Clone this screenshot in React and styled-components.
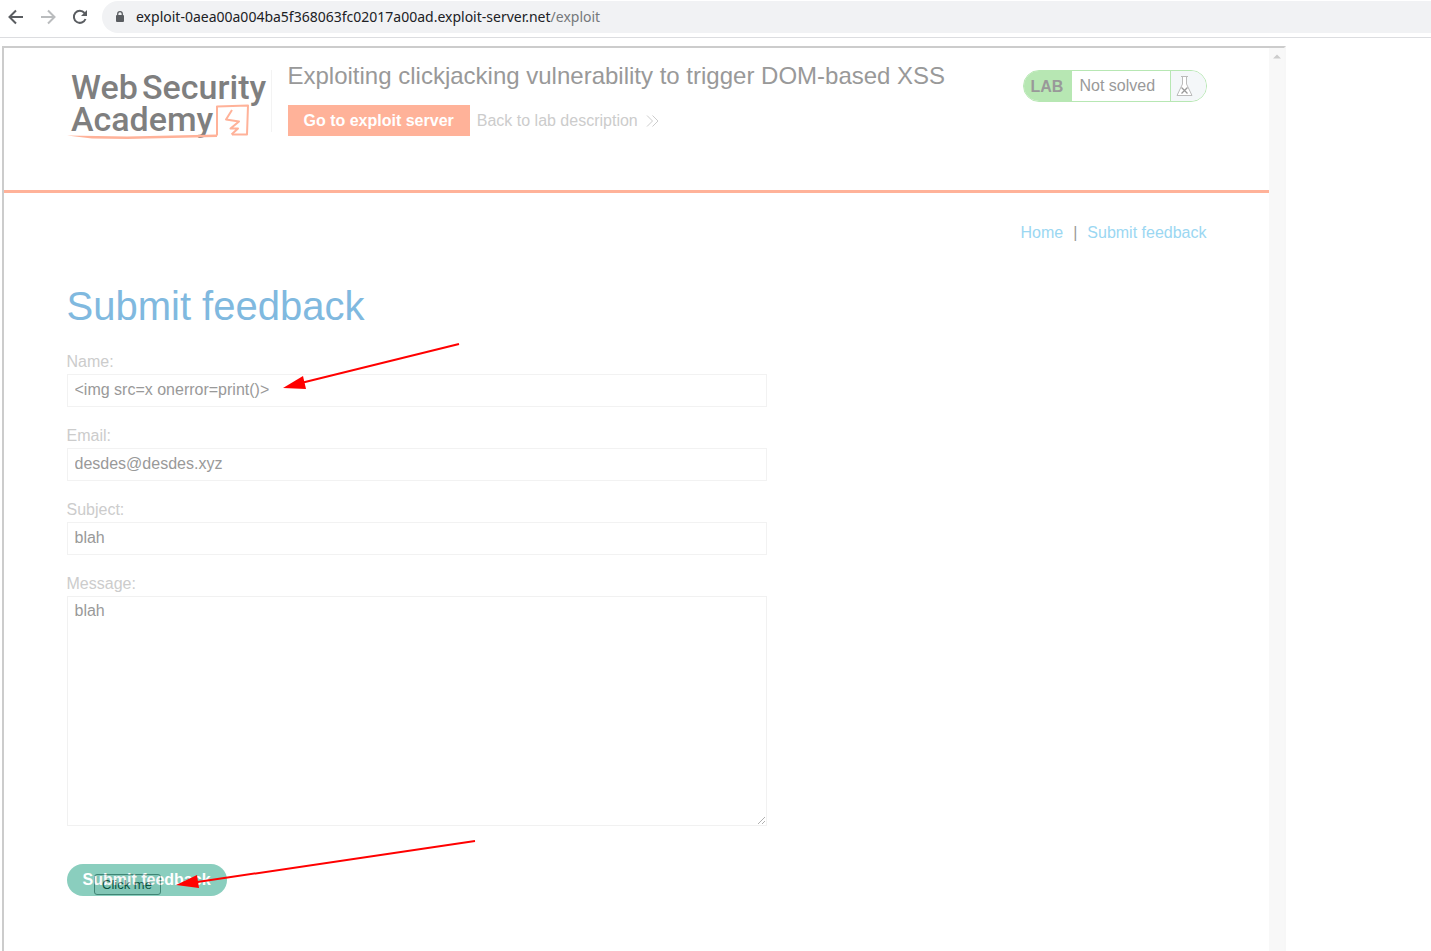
import React from "react";
import styled, { createGlobalStyle } from "styled-components";

const GlobalStyle = createGlobalStyle`
  *, *::before, *::after { box-sizing: border-box; }
  body {
    margin: 0;
    background: #fff;
    font-family: "Liberation Sans", Arial, sans-serif;
    font-size: 16px;
    line-height: 20px;
  }
`;

const Window = styled.div`
  display: flex;
  flex-direction: column;
  height: 100vh;
  overflow: hidden;
`;

const Toolbar = styled.header`
  display: flex;
  flex: none;
  align-items: center;
  gap: 12px;
  height: 38px;
  padding: 0 0 4px 6px;
  border-bottom: 1px solid #dcdde0;
`;

const ToolButton = styled.button`
  display: flex;
  width: 20px;
  height: 20px;
  padding: 0;
  border: 0;
  background: none;
  color: ${(p) => (p.disabled ? "#babcbe" : "#5a5d61")};
`;

const AddressBar = styled.div`
  display: flex;
  flex: 1;
  align-items: center;
  gap: 10px;
  height: 32px;
  padding-left: 12px;
  border-radius: 16px 0 0 16px;
  background: #f1f2f4;
  color: #202124;
  font-family: "Noto Sans", sans-serif;
  font-size: 14px;
`;

const Path = styled.span`
  color: #75787b;
`;

const Frame = styled.div`
  display: flex;
  flex: 1;
  min-height: 0;
  margin: 8px 145px 0 2px;
  border: 2px solid #ccc;
  border-right-color: #f7f7f7;
  border-bottom: 0;
`;

const Document = styled.div`
  flex: 1;
  min-width: 0;
`;

const ScrollTrack = styled.div`
  display: flex;
  flex: none;
  justify-content: center;
  width: 15px;
  padding-top: 6px;
  background: #f8f8f8;
`;

const Container = styled.div`
  max-width: 1140px;
  margin: 0 auto;
`;

const LabHeader = styled.div`
  height: 145px;
  border-bottom: 3px solid #ffb299;
`;

const HeaderRow = styled(Container)`
  display: flex;
  align-items: flex-start;
  padding-top: 14px;
`;

const LogoLink = styled.a`
  display: flex;
  height: 62px;
  margin-top: 8px;
  padding-right: 4px;
  border-right: 1px solid #f3f3f3;
`;

const TitleBlock = styled.div`
  flex: 1;
  padding-left: 16px;
`;

const Title = styled.h2`
  margin: 0 0 15px;
  color: #999;
  font-size: 24px;
  font-weight: 400;
  line-height: 28px;
`;

const Actions = styled.div`
  display: flex;
  align-items: center;
  gap: 7px;
`;

const ExploitButton = styled.button`
  height: 31px;
  padding: 0 16px;
  border: 0;
  background: #ffb299;
  color: #fff;
  font: bold 16px/20px "Liberation Sans", Arial, sans-serif;
`;

const BackLink = styled.a`
  display: flex;
  align-items: center;
  gap: 8px;
  color: #ccc;
  text-decoration: none;
`;

const Status = styled.div`
  display: flex;
  width: 184px;
  height: 32px;
  margin-top: 8px;
  overflow: hidden;
  border: 1px solid #b7e7b3;
  border-radius: 16px;
  color: #999;
  line-height: 30px;
`;

const StatusTag = styled.strong`
  width: 48px;
  padding-left: 7px;
  background: #b7e7b3;
  line-height: 32px;
`;

const StatusText = styled.span`
  flex: 1;
  padding-left: 8px;
  border-right: 1px solid #b7e7b3;
`;

const StatusIcon = styled.span`
  display: flex;
  width: 35px;
  padding: 5px 0 0 5px;
  background: #f4f7f9;
`;

const Nav = styled.nav`
  display: flex;
  justify-content: flex-end;
  gap: 10px;
  padding-top: 30px;
  color: #999;
`;

const NavLink = styled.a`
  color: #9bd7f2;
  text-decoration: none;
`;

const Heading = styled.h1`
  margin: 39px 0 20px;
  color: #80b9df;
  font-size: 40px;
  font-weight: 400;
  line-height: 48px;
`;

const Form = styled.form`
  display: flex;
  flex-direction: column;
  align-items: flex-start;
  gap: 17px;
`;

const Field = styled.div`
  position: relative;
  display: flex;
  flex-direction: column;
  width: 100%;
  max-width: 700px;
`;

const Label = styled.label`
  color: #ccc;
  line-height: 24px;
`;

const Input = styled.input`
  height: 33px;
  padding: 0 6px 2px 7px;
  border: 1px solid #f2f2f2;
  background: #fff;
  color: #999;
  font: 16px/20px "Liberation Sans", Arial, sans-serif;
  outline: 0;
`;

const TextArea = styled.textarea`
  height: 230px;
  padding: 4px 6px 4px 7px;
  border: 1px solid #e4e4e4;
  background: #fff;
  color: #333;
  font: 16px/20px "Liberation Sans", Arial, sans-serif;
  opacity: 0.5;
  outline: 0;
  resize: both;
`;

const SubmitArea = styled.div`
  position: relative;
  margin-top: 21px;
`;

const SubmitButton = styled.button`
  position: relative;
  display: block;
  height: 32px;
  padding: 0 16px;
  border: 0;
  border-radius: 16px;
  background: #179f7f;
  color: #fff;
  font: bold 16px/20px "Liberation Sans", Arial, sans-serif;
  opacity: 0.5;
`;

const DecoyButton = styled.button`
  position: absolute;
  top: 10px;
  left: 27px;
  width: 67px;
  height: 21px;
  padding: 0;
  border: 1px solid #6b6b6b;
  border-radius: 3px;
  background: #efefef;
  color: #000;
  font: 13px/16px "Liberation Sans", Arial, sans-serif;
  white-space: nowrap;
`;

const ArrowDrawing = styled.svg`
  position: absolute;
  top: ${(p) => p.$top}px;
  left: ${(p) => p.$left}px;
  pointer-events: none;
`;

function Arrow({ top, left, width, height, line, head }) {
  return (
    <ArrowDrawing $top={top} $left={left} width={width} height={height} aria-hidden="true">
      <path d={line} stroke="#f00" strokeWidth="2" fill="none" />
      <path d={head} fill="#f00" />
    </ArrowDrawing>
  );
}

function ToolIcon({ children }) {
  return (
    <svg width="20" height="20" viewBox="0 0 20 20" fill="none" stroke="currentColor" strokeWidth="2">
      {children}
    </svg>
  );
}

function Logo() {
  return (
    <svg width="200" height="72" viewBox="0 0 200 72" role="img" aria-label="Web Security Academy">
      <g fill="#7f7f7f" fontFamily="Roboto, sans-serif" fontWeight="500" fontSize="34">
        <text x="4" y="29">Web</text>
        <text x="75" y="29">Security</text>
        <text x="4" y="61">Academy</text>
      </g>
      <g fill="none" stroke="#ffb299" strokeWidth="2" strokeLinejoin="round">
        <path d="M150 65.500V36.500L181 35.500L180 64.500L165 64.500" />
        <path d="M165 40L159 49.500L172 51.500L163.500 58.500H171L164.500 64.500" />
      </g>
      <path d="M0 65.500L60 66.500L150 64.500V67L60 69L25 68.500Z" fill="#ffb299" />
    </svg>
  );
}

function TextField({ id, label, type = "text", value, children }) {
  return (
    <Field>
      <Label htmlFor={id}>{label}</Label>
      <Input id={id} type={type} defaultValue={value} spellCheck={false} />
      {children}
    </Field>
  );
}

export default function App() {
  return (
    <Window>
      <GlobalStyle />
      <Toolbar>
        <ToolButton aria-label="Back">
          <ToolIcon><path d="M17 10H4M10 3.500L3.500 10L10 16.500" /></ToolIcon>
        </ToolButton>
        <ToolButton aria-label="Forward" disabled>
          <ToolIcon><path d="M3 10H16M10 3.500L16.500 10L10 16.500" /></ToolIcon>
        </ToolButton>
        <ToolButton aria-label="Reload">
          <ToolIcon>
            <path d="M15.500 12A6 6 0 1 1 14.500 6" />
            <path d="M17 3V9H11Z" fill="currentColor" stroke="none" />
          </ToolIcon>
        </ToolButton>
        <AddressBar>
          <svg width="12" height="14" viewBox="0 0 12 14" aria-hidden="true">
            <rect x="2" y="5" width="8" height="7" rx="1" fill="#5a5d61" />
            <path d="M3.700 6V4A2.300 2.300 0 0 1 8.300 4V6" fill="none" stroke="#5a5d61" strokeWidth="1.300" />
          </svg>
          <div role="textbox" aria-label="Address" tabIndex={0}>
            exploit-0aea00a004ba5f368063fc02017a00ad.exploit-server.net<Path>/exploit</Path>
          </div>
        </AddressBar>
      </Toolbar>

      <Frame>
        <Document>
          <LabHeader>
            <HeaderRow>
              <LogoLink href="#academy"><Logo /></LogoLink>
              <TitleBlock>
                <Title>Exploiting clickjacking vulnerability to trigger DOM-based XSS</Title>
                <Actions>
                  <ExploitButton>Go to exploit server</ExploitButton>
                  <BackLink href="#lab">
                    Back to lab description
                    <svg width="14" height="12" viewBox="0 0 14 12" fill="none" stroke="#ccc" aria-hidden="true">
                      <path d="M1 0.500L6.500 6L1 11.500M6.500 0.500L12 6L6.500 11.500" />
                    </svg>
                  </BackLink>
                </Actions>
              </TitleBlock>
              <Status>
                <StatusTag>LAB</StatusTag>
                <StatusText>Not solved</StatusText>
                <StatusIcon>
                  <svg width="17" height="20" viewBox="0 0 17 20" fill="none" aria-hidden="true">
                    <path d="M6.500 1V8L1 19.500H16L10.500 8V1" fill="#fff" stroke="#bbb" />
                    <path d="M5 0.500H12" stroke="#bbb" />
                    <path d="M5.500 11.500L11.500 17.500M11.500 11.500L5.500 17.500" stroke="#999" strokeWidth="1.300" />
                  </svg>
                </StatusIcon>
              </Status>
            </HeaderRow>
          </LabHeader>

          <Container>
            <Nav>
              <NavLink href="#home">Home</NavLink>
              <span>|</span>
              <NavLink href="#feedback">Submit feedback</NavLink>
            </Nav>
            <Heading>Submit feedback</Heading>
            <Form onSubmit={(e) => e.preventDefault()}>
              <TextField id="name" label="Name:" value="<img src=x onerror=print()>">
                <Arrow
                  top={-8}
                  left={216}
                  width={180}
                  height={52}
                  line="M176 2L18 41"
                  head="M0 46L20 34L23 47Z"
                />
              </TextField>
              <TextField id="email" label="Email:" type="email" value="desdes@desdes.xyz" />
              <TextField id="subject" label="Subject:" value="blah" />
              <Field>
                <Label htmlFor="message">Message:</Label>
                <TextArea id="message" defaultValue="blah" spellCheck={false} />
              </Field>
              <SubmitArea>
                <DecoyButton type="button">Click me</DecoyButton>
                <SubmitButton type="submit">Submit feedback</SubmitButton>
                <Arrow
                  top={-26}
                  left={109}
                  width={302}
                  height={54}
                  line="M299 3L18 44.500"
                  head="M0 47L21 37L23 50Z"
                />
              </SubmitArea>
            </Form>
          </Container>
        </Document>
        <ScrollTrack>
          <svg width="8" height="5" viewBox="0 0 8 5" aria-hidden="true">
            <path d="M0 4.500L4 0.500L8 4.500Z" fill="#ccc" />
          </svg>
        </ScrollTrack>
      </Frame>
    </Window>
  );
}
